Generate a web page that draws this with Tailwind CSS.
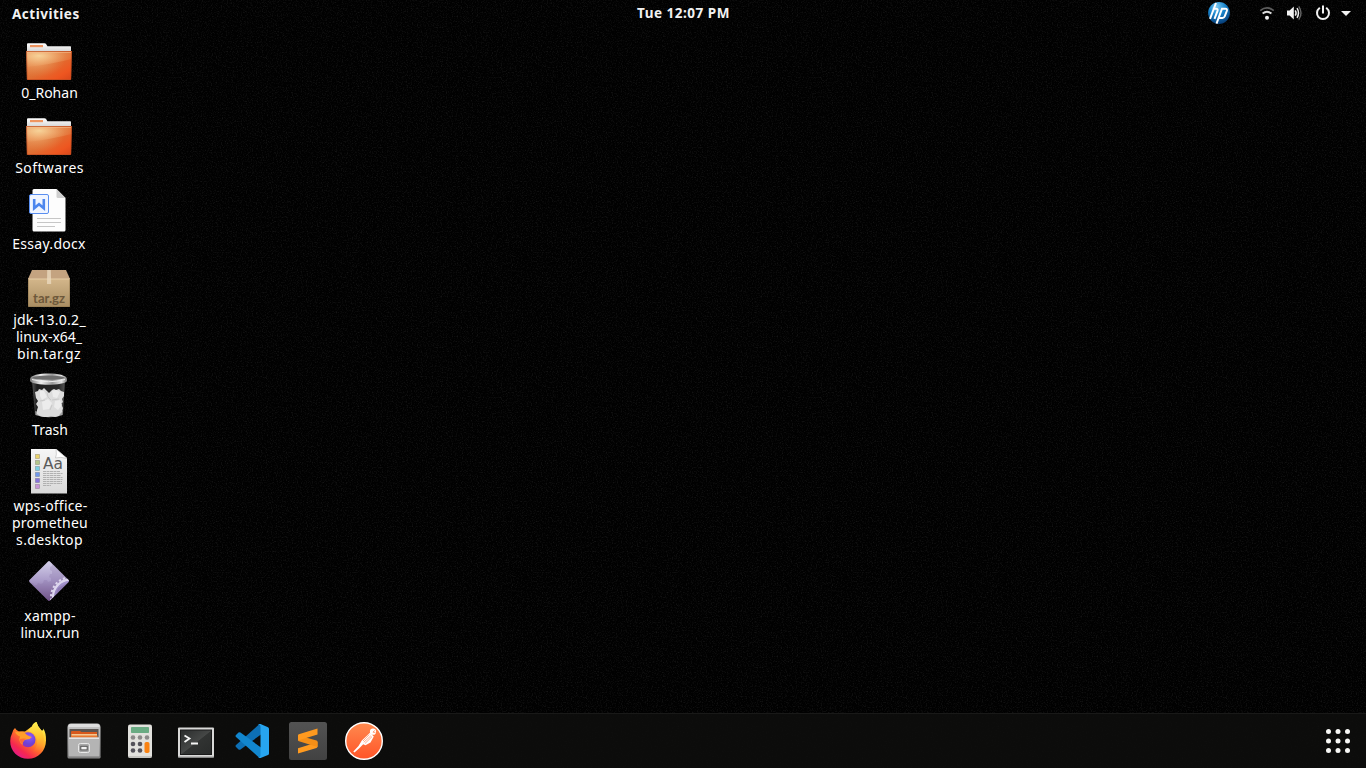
<!DOCTYPE html>
<html lang="en">
<head>
<meta charset="utf-8">
<title>Desktop</title>
<script src="https://cdn.jsdelivr.net/npm/@tailwindcss/browser@4"></script>
</head>
<body class="h-screen overflow-hidden bg-black font-['Noto_Sans','Open_Sans',sans-serif] text-white">
<div class="relative flex h-screen w-screen flex-col overflow-hidden bg-[#010101]">
  <!-- wallpaper grain -->
  <svg class="pointer-events-none absolute inset-0 h-full w-full" aria-hidden="true">
    <filter id="grain" x="0" y="0" width="100%" height="100%" color-interpolation-filters="sRGB">
      <feTurbulence type="fractalNoise" baseFrequency="0.8" numOctaves="2" seed="4"/>
      <feColorMatrix values="0 0 0 0 1  0 0 0 0 1  0 0 0 0 1  0.2 0 0 0 -0.097"/>
    </filter>
    <rect width="100%" height="100%" filter="url(#grain)"/>
  </svg>

  <header class="relative grid h-[27px] shrink-0 grid-cols-3 grid-rows-[27px] items-start text-[13.5px] leading-[27px] font-bold tracking-[0.5px] text-[#f2f2f2]">
    <span class="pt-px pl-3 whitespace-nowrap">Activities</span>
    <span class="pl-px text-center whitespace-nowrap">Tue 12:07 PM</span>
    <svg class="h-[27px] w-[166px] justify-self-end" viewBox="1200 0 166 27">
      <defs><radialGradient id="hp" cx=".4" cy=".2" r=".85"><stop offset="0" stop-color="#7cc8f0"/><stop offset=".45" stop-color="#1784cc"/><stop offset="1" stop-color="#06366e"/></radialGradient></defs>
      <circle cx="1219" cy="13" r="10.9" fill="url(#hp)"/>
      <g fill="none" stroke="#fff" stroke-width="2">
        <path d="M1216 3 1210 18.800M1212.800 8.700H1216Q1218.200 8.700 1217.500 10.900L1214.500 18.800"/>
        <path d="M1216.500 23.600 1222 8.700H1225.300Q1227.600 8.700 1226.800 11L1224.700 16.400Q1224 17.900 1222.300 17.900H1218.700"/>
      </g>
      <g fill="none" stroke-width="1.8">
        <path d="M1260.200 10.600Q1267 5.200 1273.800 10.600" stroke="#5c5c5c"/>
        <path d="M1262.600 13.500Q1267 10 1271.400 13.500" stroke="#ddd"/>
      </g>
      <circle cx="1267" cy="17.800" r="2" fill="#f2f2f2"/>
      <path d="M1287 10.500h2.600l4.200-4v13l-4.200-4H1287z" fill="#f2f2f2"/>
      <path d="M1295.200 10.300Q1297 13 1295.200 15.700M1297 8.200Q1300 13 1297 17.800" fill="none" stroke="#eee" stroke-width="1.500"/>
      <path d="M1298.800 6.400Q1303.200 13 1298.800 19.600" fill="none" stroke="#666" stroke-width="1.400"/>
      <path d="M1319.300 8.300A6 6 0 1 0 1326.700 8.300M1323 6.200V12.800" fill="none" stroke="#f2f2f2" stroke-width="2" stroke-linecap="round"/>
      <path d="M1341 11h10l-5 5z" fill="#f2f2f2"/>
    </svg>
  </header>

  <main class="relative flex min-h-0 flex-1 flex-col pt-[9px] pl-[2px] text-center text-[14px] leading-[17px]">
    <div class="flex w-[94px] flex-col items-center gap-[11px] whitespace-nowrap">
      <div class="-mb-px flex flex-col items-center">
        <svg class="size-12" viewBox="0 0 48 48">
          <defs>
            <linearGradient id="fo" x1="0" y1="0" x2="1" y2="1"><stop offset="0" stop-color="#e58a4d"/><stop offset=".5" stop-color="#df6f33"/><stop offset=".8" stop-color="#ee5620"/><stop offset="1" stop-color="#d8461a"/></linearGradient>
            <radialGradient id="fg" cx=".28" cy=".3" r=".75"><stop offset="0" stop-color="#f8d9a0" stop-opacity=".9"/><stop offset="1" stop-color="#f0a468" stop-opacity=".15"/></radialGradient>
            <radialGradient id="fh" cx=".25" cy=".3" r=".6"><stop offset="0" stop-color="#f4c88c" stop-opacity=".6"/><stop offset="1" stop-color="#f0a468" stop-opacity="0"/></radialGradient>
            <linearGradient id="fw" x1="0" y1="0" x2="0" y2="1"><stop offset="0" stop-color="#fff"/><stop offset="1" stop-color="#d4d4d4"/></linearGradient>
            <symbol id="folder" viewBox="0 0 48 48">
              <path d="M2 16V8.200Q2 7.200 3 7.200H19.300Q20.700 7.200 21.400 8.400L22.400 10.200H45.300Q46 10.200 46 11V16Z" fill="url(#fw)"/>
              <rect x="5" y="9" width="13" height="2.200" fill="#ef9560"/>
              <path d="M1.300 15H46.800L46 43Q46 44 45 44H3Q2 44 2 43Z" fill="url(#fo)"/>
              <path d="M1.300 15H46.800L46 44H2Z" fill="url(#fh)"/>
              <path d="M1.300 15H46.800L46.500 23Q28 28 2 31Z" fill="url(#fg)"/>
              <path d="M1.500 15.500H46.600L45.800 43.500H2.200Z" fill="none" stroke="#bd4b20" stroke-opacity=".65"/>
              <path d="M2 16.500H46" stroke="#f5bd8c" stroke-opacity=".6"/>
            </symbol>
          </defs>
          <use href="#folder" width="48" height="48"/>
        </svg>
        <span class="pl-px">0_Rohan</span>
      </div>

      <div class="flex flex-col items-center">
        <svg class="size-12" viewBox="0 0 48 48"><use href="#folder" width="48" height="48"/></svg>
        <span class="pl-px tracking-[0.4px]">Softwares</span>
      </div>

      <div class="flex flex-col items-center">
        <svg class="size-12" viewBox="25 187 48 48">
          <path d="M34 189H56.500L65.500 198V230Q65.500 231.500 64 231.500H34Q32.500 231.500 32.500 230V190.500Q32.500 189 34 189Z" fill="#fdfdfd"/>
          <path d="M56.500 189 65.500 198H58Q56.500 198 56.500 196.500Z" fill="#cfcfcf"/>
          <path d="M37 218.500H61M37 222.500H61M37 226.500H55" stroke="#c6c6c6"/>
          <rect x="29.500" y="194.500" width="19" height="19" rx="1.500" fill="#f0f5ff" stroke="#5a8ff0"/>
          <path d="M34.200 199V208.200L39 204.200 43.800 208.200V199" fill="none" stroke="#4c86ee" stroke-width="2.600"/>
        </svg>
        <span class="tracking-[0.3px]">Essay.docx</span>
      </div>

      <div class="flex flex-col items-center">
        <svg class="size-12" viewBox="25 263 48 48">
          <defs><linearGradient id="bx" x1="0" y1="0" x2="0" y2="1"><stop offset="0" stop-color="#d3b68a"/><stop offset="1" stop-color="#a98d62"/></linearGradient></defs>
          <path d="M32 270H66L70 279H28Z" fill="#c4a380"/>
          <path d="M28 279H70V306Q70 307 69 307H29Q28 307 28 306Z" fill="url(#bx)"/>
          <path d="M28 279H70" stroke="#e6cda6"/>
          <path d="M47.200 270H50.800L51.200 284H47Z" fill="#ead8bd" fill-opacity=".8"/>
          <path d="M28.500 279V306.500H69.500V279" fill="none" stroke="#8e7449" stroke-opacity=".5"/>
          <text x="33" y="303" textLength="32" lengthAdjust="spacingAndGlyphs" class="font-['Lato'] text-[13px] font-bold" fill="#6d583a">tar.gz</text>
        </svg>
        <span class="flex flex-col items-center"><span class="pl-px tracking-[0.25px]">jdk-13.0.2_</span><span>linux-x64_</span><span class="tracking-[0.4px]">bin.tar.gz</span></span>
      </div>

      <div class="flex flex-col items-center">
        <svg class="size-12" viewBox="25 373 48 48">
          <defs>
            <linearGradient id="rim" x1="0" y1="0" x2="1" y2="0"><stop offset="0" stop-color="#777"/><stop offset=".3" stop-color="#eee"/><stop offset=".6" stop-color="#999"/><stop offset=".85" stop-color="#e6e6e6"/><stop offset="1" stop-color="#777"/></linearGradient>
            <linearGradient id="gl" x1="0" y1="0" x2="1" y2="0"><stop offset="0" stop-color="#555"/><stop offset=".15" stop-color="#1d1d1d"/><stop offset=".8" stop-color="#2a2a2a"/><stop offset="1" stop-color="#555"/></linearGradient>
          </defs>
          <path d="M32 380H65L63 415Q48.500 419.500 35 415Z" fill="url(#gl)"/>
          <path d="M35.300 411Q48.500 416 62.700 411L62.500 415Q48.500 419.500 35.500 415Z" fill="#a5a5a5"/>
          <path d="M35 392l3-1 1-2 3 1 2-2 3 3 2 2 3-3 2-1 2 1 3-1 2 2 3 1 0 4-2 3 1 3-2 2 2 4-1 4-2 2-1 2-4 1-4-1-3 1-4 0-4-1-3-2 0-4 1-3-2-3 2-3-2-3z" fill="#dcdcdc"/>
          <path d="M40 391l4 0 3 6-5 3-2-4zM52 391l4-1 4 2-3 6-4-1zM42 402l6-3 4 4-3 6-6 1zM55 401l5-1 2 5-4 5-4-3z" fill="#ececec"/>
          <path d="M47 392l1 5 3 3M40 401l5-1M52 400l7-1M50 410l2-5" fill="none" stroke="#c0c0c0" stroke-width=".7"/>
          <path d="M30 379C30 371.700 67 371.700 67 379V381C64 386 33 386 30 381Z" fill="url(#rim)"/>
          <ellipse cx="48.500" cy="377.700" rx="16" ry="2.100" fill="#6e6e6e"/>
          <path d="M32 379.500Q48.500 384 65 379.500" fill="none" stroke="#ececec"/>
        </svg>
        <span class="pl-[2px]">Trash</span>
      </div>

      <div class="flex flex-col items-center">
        <svg class="size-12" viewBox="25 449 48 48">
          <defs><linearGradient id="pg" x1="0" y1="0" x2="0" y2="1"><stop offset="0" stop-color="#f6f6f6"/><stop offset="1" stop-color="#d9d9d9"/></linearGradient></defs>
          <path d="M31 449H56L67 458V493.500H31Z" fill="url(#pg)"/>
          <path d="M56 449Q57 455 55.500 458Q60 456.500 67 458.500Z" fill="#fff" stroke="#b5b5b5" stroke-width=".6"/>
          <g stroke-opacity=".45" stroke="#666" stroke-width=".7">
            <rect x="35.400" y="454.400" width="4.200" height="4.200" fill="#ead36b"/><rect x="35.400" y="460.400" width="4.200" height="4.200" fill="#b3c68a"/><rect x="35.400" y="466.400" width="4.200" height="4.200" fill="#79cfe2"/><rect x="35.400" y="472.400" width="4.200" height="4.200" fill="#6f98ec"/><rect x="35.400" y="478.400" width="4.200" height="4.200" fill="#8673de"/><rect x="35.400" y="484.400" width="4.200" height="4.200" fill="#c795d8"/>
          </g>
          <text x="43" y="469" textLength="20" lengthAdjust="spacingAndGlyphs" class="font-['DejaVu_Sans'] text-[15px]" fill="#5a5a5a">Aa</text>
          <path d="M43 471.500H60M43 473.500H62.500M43 475.500H61M43 477.500H62.500M43 479.500H62.500M43 481.500H62M43 483.500H62M43 485.500H51" stroke="#aaa" stroke-width=".9" stroke-dasharray="3 .5"/>
        </svg>
        <span class="flex flex-col items-center"><span class="pl-[3px] tracking-[0.2px]">wps-office-</span><span class="pl-[2px] tracking-[0.25px]">prometheu</span><span class="pl-px tracking-[0.4px]">s.desktop</span></span>
      </div>

      <div class="flex flex-col items-center">
        <svg class="size-12" viewBox="25 559 48 48">
          <defs>
            <linearGradient id="dm" x1="0" y1="0" x2="0" y2="1"><stop offset="0" stop-color="#d6d3ec"/><stop offset=".5" stop-color="#a99ac8"/><stop offset="1" stop-color="#6b4a80"/></linearGradient>
            <clipPath id="dc"><path d="M47.800 561.700Q49 560.500 50.200 561.700L68.300 579.800Q69.500 581 68.300 582.200L50.200 600.300Q49 601.500 47.800 600.300L29.700 582.200Q28.500 581 29.700 579.800Z"/></clipPath>
          </defs>
          <g clip-path="url(#dc)">
            <rect x="28" y="560" width="42" height="42" fill="url(#dm)"/>
            <path d="M28 584l5-1 1 2 3 0 1-2 3 1 2-1 1-3 3 0 1 2 3-1 0-3-2-1 1-3 2 0 0-3-2-1 0-3 2-1 0-5H72V603H28Z" fill="#7d6499" fill-opacity=".22"/>
            <circle cx="70.500" cy="597" r="17.500" fill="#a99bd8" fill-opacity=".6" stroke="#ddd6ee" stroke-width="2.200"/>
            <circle cx="70.500" cy="597" r="19.500" fill="none" stroke="#ddd6ee" stroke-width="2" stroke-dasharray="2.200 2.200"/>
            <path d="M58 588l11-6v20H54Z" fill="#8670a8" fill-opacity=".6"/>
          </g>
        </svg>
        <span class="flex flex-col items-center"><span class="pl-[2px] tracking-[0.2px]">xampp-</span><span class="pl-[2px]">linux.run</span></span>
      </div>
    </div>
  </main>

  <footer class="relative flex h-[55px] shrink-0 items-center gap-2 border-t border-[#191918] bg-[#0e0e0d]/85 px-1">
    <svg class="size-12" viewBox="4 717 48 48">
      <defs>
        <linearGradient id="ff" x1=".85" y1=".1" x2=".2" y2=".95"><stop offset="0" stop-color="#fff44f"/><stop offset=".3" stop-color="#ffb62a"/><stop offset=".55" stop-color="#ff6a2c"/><stop offset=".8" stop-color="#f5284f"/><stop offset="1" stop-color="#e3198a"/></linearGradient>
        <linearGradient id="fy" x1="0" y1="0" x2="0" y2="1"><stop offset="0" stop-color="#fff150"/><stop offset=".5" stop-color="#ffc22e"/><stop offset="1" stop-color="#ff7a2e" stop-opacity="0"/></linearGradient>
        <radialGradient id="fp" cx=".6" cy=".3" r=".8"><stop offset="0" stop-color="#9059ff"/><stop offset=".6" stop-color="#6e43d6"/><stop offset="1" stop-color="#9b2cb0"/></radialGradient>
      </defs>
      <path d="M15 728Q16.500 731 19 731.500Q22 731 25 731.500Q29 728.500 32 726.500Q32.500 723.500 36.500 722Q37.500 726.500 41 730Q43.500 731.500 43.300 728.500Q46.200 733 46 740.500C46 751 38 758.800 28 758.800S10 751 10.200 741Q10.300 736.500 12.200 733Q12.500 730 15 728Z" fill="url(#ff)"/>
      <path d="M28 731Q30.500 727 32.500 726Q32.800 723.500 36.500 722Q37.500 726.500 41 730Q45 735 43.500 744Q40 753 32 753Q40 745 36 736Q33 732 28 731Z" fill="url(#fy)"/>
      <circle cx="28" cy="739.800" r="7.500" fill="url(#fp)"/>
      <path d="M19 731.800Q24 731.500 27 735Q29.500 736.500 31.800 737Q30 739.500 26.500 739.500Q22.500 740 22.500 745Q18 741.500 20 736.500Q16 735 15 731.500Q17 732.500 19 731.800Z" fill="#ff9d2b"/>
      <path d="M20 739Q22.500 738 26.500 738.800Q23 740 22.500 744.500Q19.500 742 20 739Z" fill="#ff6b35"/>
    </svg>

    <svg class="size-12" viewBox="60 717 48 48">
      <defs><linearGradient id="cb" x1="0" y1="0" x2="0" y2="1"><stop offset="0" stop-color="#c9c9c9"/><stop offset="1" stop-color="#8d8d8d"/></linearGradient></defs>
      <path d="M71 723.500H97Q100.500 723.500 100.500 727.500V757Q100.500 758.500 99 758.500H69Q67.500 758.500 67.500 757V727.500Q67.500 723.500 71 723.500Z" fill="url(#cb)"/>
      <path d="M71 724H97Q99 724 99.700 727H68.300Q69 724 71 724Z" fill="#dedede"/>
      <rect x="69.500" y="729" width="29" height="9" fill="#5c5652"/>
      <path d="M71 732Q71 731 72 731H80L81.500 732H97V738H71Z" fill="#d8591c"/>
      <path d="M71.500 734H97V738H71.500Z" fill="#f3c892"/><path d="M71 735.500H97.500V738H71Z" fill="#e9772e"/>
      <path d="M69 737.500H99V757H69Z" fill="#b4b4b4"/><path d="M69 737.500H99V739H69Z" fill="#e4e4e4"/>
      <path d="M68 757H100.500" stroke="#747474"/>
      <rect x="78.500" y="743.500" width="11" height="9" rx="1.800" fill="#a8a8a8" stroke="#e8e8e8"/>
      <rect x="80.800" y="746.300" width="6.400" height="3.600" fill="#f1f1f1" stroke="#555"/>
    </svg>

    <svg class="size-12" viewBox="116 717 48 48">
      <rect x="128" y="724.500" width="24" height="33.500" rx="2" fill="#e2e1dd"/>
      <path d="M128.500 757H151.500" stroke="#aaa9a5"/>
      <rect x="131" y="727" width="18" height="6" rx=".8" fill="#6aab83"/>
      <g fill="#8b8a89"><circle cx="133" cy="737.500" r="2.300"/><circle cx="140" cy="737.500" r="2.300"/><circle cx="147" cy="737.500" r="2.300"/></g>
      <g fill="#54525a"><circle cx="133" cy="744" r="2.300"/><circle cx="140" cy="744" r="2.300"/><circle cx="133" cy="750.500" r="2.300"/><circle cx="140" cy="750.500" r="2.300"/></g>
      <rect x="144.500" y="742" width="5" height="11" rx="1.800" fill="#fa8211"/>
    </svg>

    <svg class="size-12" viewBox="172 717 48 48">
      <defs><linearGradient id="tm" x1="0" y1="0" x2="1" y2="1"><stop offset="0" stop-color="#2a2c2c"/><stop offset=".5" stop-color="#454746"/><stop offset=".52" stop-color="#313332"/><stop offset="1" stop-color="#292b2a"/></linearGradient></defs>
      <rect x="178" y="727.500" width="36" height="30" rx="1" fill="#d9d9d8"/>
      <path d="M178 757H214" stroke="#999"/>
      <rect x="180.500" y="730" width="31" height="24.500" fill="url(#tm)" stroke="#1a1a1a"/>
      <path d="M184.500 735.500 189.500 738.500 184.500 742M191 743.500H198" fill="none" stroke="#f5f5f5" stroke-width="1.800"/>
    </svg>

    <svg class="size-12" viewBox="228 717 48 48">
      <path d="M261 724.200V734.500L240.500 749.500Q239.500 750.200 238.500 749.400L236 747Q235 746 236 745L259.500 724Z" fill="#0d6fb4"/>
      <path d="M261 757.800V747.500L240.500 732.500Q239.500 731.800 238.500 732.600L236 735Q235 736 236 737L259.500 758Z" fill="#1286ce"/>
      <path d="M260.500 724 268 727.300Q269 727.800 269 729V753.500Q269 754.700 268 755.100L260.500 758Q258.500 758 258 757Q260.500 758 260.500 755V727Q260.500 724 258 725Q259 723.500 260.500 724Z" fill="#27a5f0"/>
    </svg>

    <svg class="size-12" viewBox="284 717 48 48">
      <defs><linearGradient id="sb" x1="0" y1="0" x2="0" y2="1"><stop offset="0" stop-color="#535353"/><stop offset="1" stop-color="#424242"/></linearGradient></defs>
      <rect x="289" y="722" width="38" height="38" rx="2.500" fill="url(#sb)"/>
      <path d="M298 748.200 316.500 742.500Q317.500 742 317.500 741.300V746.500Q317.500 747.500 316.500 747.900L298 753.600Z" fill="#ff9a1f"/>
      <path d="M298 735.500V740Q298 741 299 741.300L317.500 747V742Q317.500 741 316.500 740.600L305 737.200Z" fill="#f58f17"/>
      <path d="M298 740.500 317.500 734.500V728.500L298.800 734.300Q298 734.500 298 735.500Z" fill="#ff9a1f"/>
    </svg>

    <svg class="size-12" viewBox="340 717 48 48">
      <defs><linearGradient id="pm" x1="0" y1="0" x2="0" y2="1"><stop offset="0" stop-color="#ff8a4f"/><stop offset="1" stop-color="#ff5428"/></linearGradient></defs>
      <circle cx="364" cy="741" r="18.300" fill="url(#pm)" stroke="#fff" stroke-width="1.400"/>
      <circle cx="373" cy="731.700" r="3.100" fill="#fff"/>
      <path d="M374.600 730.400 373 732.200 375.300 732.400" fill="none" stroke="#ff7540" stroke-width=".7"/>
      <path d="M370 732.800 373.800 736.500 370.500 742.500 365.500 745.200 363.200 744.200 359.500 748.100 354.500 752.500 353.300 751.500 358.500 746 361.800 740.500Z" fill="#fff"/>
      <path d="M370.800 735.800 363.800 742.300M369.200 734.600 363 741M372 736.600 365 743.500" stroke="#ff7843" stroke-width=".6"/>
    </svg>

    <svg class="ml-auto size-12" viewBox="1314 717 48 48" fill="#f7f7f5">
      <circle cx="1328.500" cy="731.500" r="2.500"/><circle cx="1338" cy="731.500" r="2.500"/><circle cx="1347.500" cy="731.500" r="2.500"/>
      <circle cx="1328.500" cy="741" r="2.500"/><circle cx="1338" cy="741" r="2.500"/><circle cx="1347.500" cy="741" r="2.500"/>
      <circle cx="1328.500" cy="750.500" r="2.500"/><circle cx="1338" cy="750.500" r="2.500"/><circle cx="1347.500" cy="750.500" r="2.500"/>
    </svg>
  </footer>
</div>
</body>
</html>
